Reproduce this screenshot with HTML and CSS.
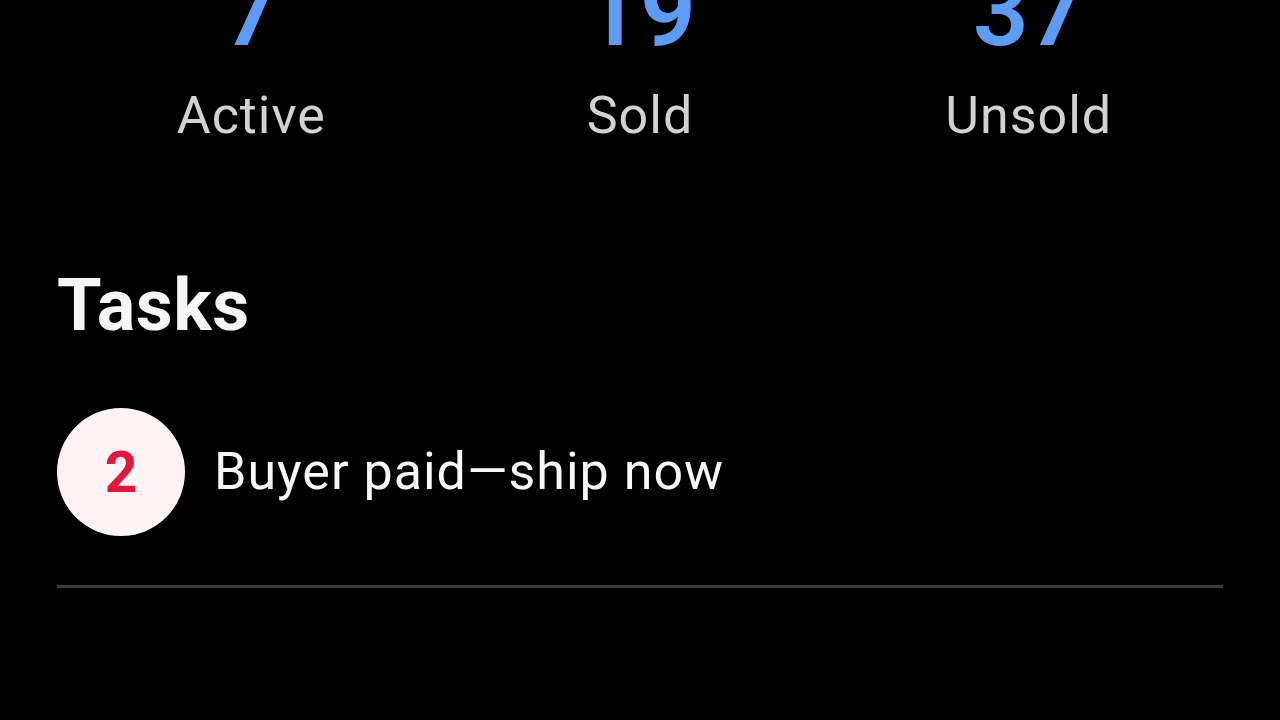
FILE: index.html
```html
<!DOCTYPE html>
<html lang="en">
<head>
<meta charset="utf-8">
<title>Selling overview</title>
<link rel="stylesheet" href="styles.css">
</head>
<body>
<main class="page">
  <section class="stats">
    <div class="stat">
      <div class="stat-num">7</div>
      <div class="stat-label">Active</div>
    </div>
    <div class="stat">
      <div class="stat-num">19</div>
      <div class="stat-label">Sold</div>
    </div>
    <div class="stat">
      <div class="stat-num">37</div>
      <div class="stat-label">Unsold</div>
    </div>
  </section>
  <section class="tasks">
    <h2 class="tasks-title">Tasks</h2>
    <div class="task">
      <div class="task-badge">2</div>
      <div class="task-text">Buyer paid—ship now</div>
    </div>
    <hr class="divider">
  </section>
</main>
</body>
</html>
```

FILE: styles.css
```css
html, body {
  margin: 0;
  padding: 0;
  background: #000;
  height: 100%;
  overflow: hidden;
}

.page {
  padding: 0 57px;
  font-family: Roboto, "Liberation Sans", Arial, sans-serif;
  color: #f4f4f4;
}

.stats {
  display: grid;
  grid-template-columns: repeat(3, 1fr);
  margin-top: -38px;
}

.stat {
  display: flex;
  flex-direction: column;
  align-items: center;
}

.stat-num {
  font-size: 98px;
  line-height: 100px;
  height: 100px;
  font-weight: 600;
  color: #5c9cf7;
}

.stat-label {
  margin-top: 23px;
  font-size: 52px;
  line-height: 62px;
  letter-spacing: 1px;
  color: #d2d2d2;
}

.tasks {
  margin-top: 116px;
}

.tasks-title {
  margin: 0;
  font-size: 72px;
  line-height: 86px;
  font-weight: 700;
  letter-spacing: 0.5px;
  color: #f6f6f6;
}

.task {
  margin-top: 59px;
  display: flex;
  align-items: center;
  gap: 29px;
}

.task-badge {
  width: 128px;
  height: 128px;
  border-radius: 50%;
  background: #fdf3f5;
  color: #e3163f;
  font-size: 57px;
  font-weight: 700;
  display: flex;
  align-items: center;
  justify-content: center;
  flex-shrink: 0;
}

.task-text {
  font-size: 52px;
  line-height: 62px;
  letter-spacing: 1px;
  color: #f8f8f8;
}

.divider {
  margin: 49px 0 0;
  border: 0;
  height: 3px;
  background: #3c3c3c;
}
```
